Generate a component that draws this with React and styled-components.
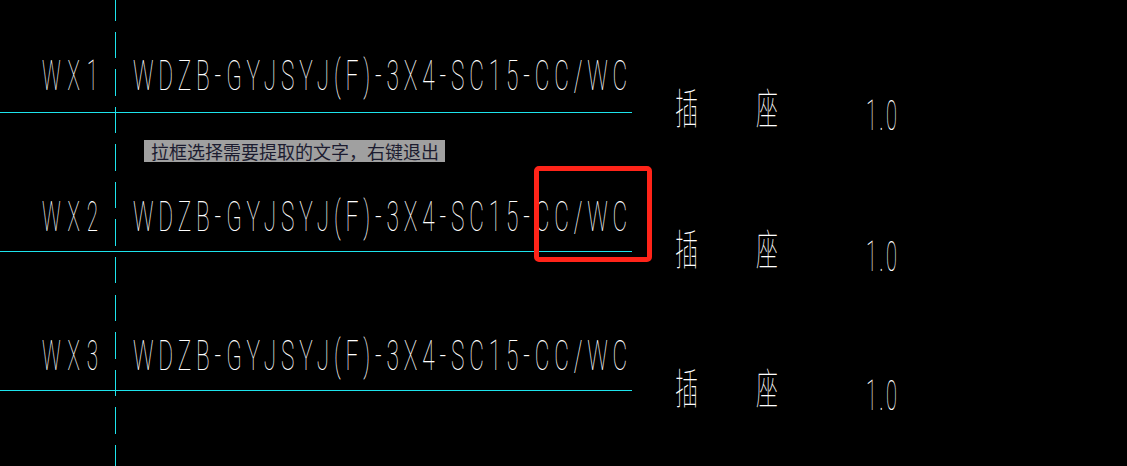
import React, { useLayoutEffect, useRef, useState } from 'react';
import styled, { createGlobalStyle } from 'styled-components';

const CYAN = '#1de4ec';

const GlobalStyle = createGlobalStyle`
  html, body {
    margin: 0;
    padding: 0;
    background-color: #000;
  }
  body {
    overflow: hidden;
  }
`;

const Canvas = styled.div`
  position: relative;
  width: 1127px;
  height: 466px;
  overflow: hidden;
  background-color: #000;
`;

const Rows = styled.div`
  display: flex;
  flex-direction: column;
`;

const Row = styled.div`
  display: grid;
  grid-template-columns: 632px 1fr;
  height: ${props => props.$height}px;
`;

// left part: circuit name + cable spec, sitting on the cyan underline
const Wiring = styled.div`
  display: flex;
  align-items: flex-end;
  box-sizing: border-box;
  border-bottom: 1px solid ${CYAN};
  padding: 0 0 ${props => props.$lift}px 42px;
`;

// right part: device name + load, hangs a bit below the underline
const Spec = styled.div`
  display: flex;
  align-items: flex-end;
  align-self: end;
  margin-bottom: -${props => props.$sink}px;
  padding-left: 43px;
`;

const FitBox = styled.span`
  display: block;
  flex: none;
  width: ${props => props.$width}px;
  height: ${props => props.$size}px;
  margin-left: ${props => props.$left}px;
  margin-bottom: ${props => props.$drop}px;
  white-space: nowrap;
`;

const Glyphs = styled.span`
  display: inline-block;
  font-family: Roboto, "Noto Sans CJK SC", sans-serif;
  font-weight: 100;
  font-size: ${props => props.$size}px;
  letter-spacing: ${props => props.$spacing}px;
  line-height: 1;
  color: #fff;
  transform-origin: 0 0;
`;

const Hint = styled.div`
  position: absolute;
  left: 144px;
  top: 140px;
  width: 301px;
  height: 22px;
  box-sizing: border-box;
  padding-left: 7px;
  background-color: #a0a0a0;
  color: #1c1c30;
  font-family: "Noto Sans CJK SC", sans-serif;
  font-size: 18px;
  line-height: 22px;
  white-space: nowrap;
`;

const Marquee = styled.div`
  position: absolute;
  left: 534px;
  top: 166px;
  width: 118px;
  height: 96px;
  box-sizing: border-box;
  border: 5px solid #ff2419;
  border-radius: 5px;
`;

const Guide = styled.div`
  position: absolute;
  left: 115px;
  top: -6px;
  width: 1px;
  height: 490px;
  background-image: repeating-linear-gradient(to bottom, ${CYAN} 0, ${CYAN} 26.5px, transparent 26.5px, transparent 37.57px);
`;

// CAD text is narrow and loosely spaced: squeeze the glyphs to the measured width
const CadText = ({ width, left = 0, size = 42, spacing = 0, drop = 0, children }) => {
  const ref = useRef(null);
  const [scale, setScale] = useState(1);

  useLayoutEffect(() => {
    const fit = () => {
      const el = ref.current;
      if (el && el.offsetWidth) setScale(width / (el.offsetWidth - spacing));
    };
    fit();
    if (document.fonts) document.fonts.ready.then(fit);
  }, [width, spacing]);

  return (
    <FitBox $width={width} $left={left} $size={size} $drop={drop}>
      <Glyphs ref={ref} $size={size} $spacing={spacing} style={{ transform: `scaleX(${scale})` }}>
        {children}
      </Glyphs>
    </FitBox>
  );
};

const circuits = [
  { id: 'WX1', height: 113, lift: 15, sink: 18 },
  { id: 'WX2', height: 139, lift: 13, sink: 20 },
  { id: 'WX3', height: 139, lift: 13, sink: 20 },
];

const App = () => (
  <Canvas>
    <GlobalStyle />
    <Rows>
      {circuits.map(c => (
        <Row key={c.id} $height={c.height}>
          <Wiring $lift={c.lift}>
            <CadText width={56} spacing={14}>{c.id}</CadText>
            <CadText width={494} left={35} spacing={9}>WDZB-GYJSYJ(F)-3X4-SC15-CC/WC</CadText>
          </Wiring>
          <Spec $sink={c.sink}>
            <CadText width={23}>插</CadText>
            <CadText width={22} left={58}>座</CadText>
            <CadText width={31} left={88} spacing={5} drop={-6}>1.0</CadText>
          </Spec>
        </Row>
      ))}
    </Rows>
    <Guide />
    <Hint>拉框选择需要提取的文字，右键退出</Hint>
    <Marquee />
  </Canvas>
);

export default App;
